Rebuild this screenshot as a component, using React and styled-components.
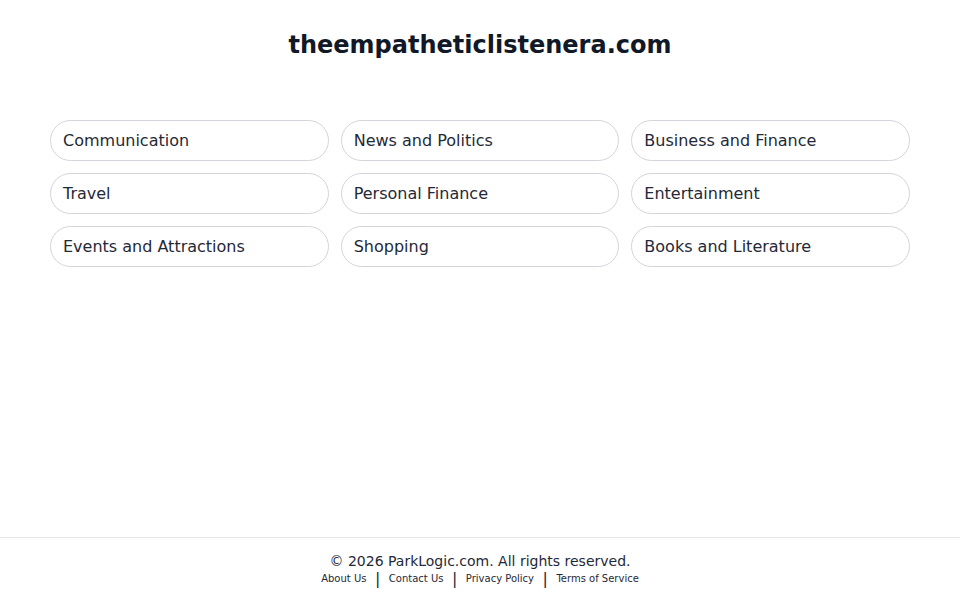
import React from 'react'
import styled, { createGlobalStyle } from 'styled-components'

const categories = [
  'Communication',
  'News and Politics',
  'Business and Finance',
  'Travel',
  'Personal Finance',
  'Entertainment',
  'Events and Attractions',
  'Shopping',
  'Books and Literature',
]

const links = ['About Us', 'Contact Us', 'Privacy Policy', 'Terms of Service']

const GlobalStyle = createGlobalStyle`
  html, body {
    margin: 0;
    padding: 0;
    background: #ffffff;
    font-family: "DejaVu Sans", "Liberation Sans", sans-serif;
  }
  * { box-sizing: border-box; }
`

const Page = styled.div`
  min-height: 100vh;
  display: flex;
  flex-direction: column;
`

const Main = styled.main`
  flex: 1;
  padding: 29px 50px 0;
`

const Title = styled.h1`
  margin: 0;
  text-align: center;
  font-size: 24px;
  line-height: 32px;
  font-weight: 700;
  color: #111827;
`

const Grid = styled.div`
  margin-top: 59px;
  display: grid;
  grid-template-columns: repeat(3, 1fr);
  gap: 12px;
`

const Pill = styled.a`
  display: flex;
  align-items: center;
  height: 41px;
  padding: 0 12px;
  border: 1px solid #d1d5db;
  border-radius: 21px;
  font-size: 16px;
  color: #1f2937;
  text-decoration: none;
  cursor: pointer;
`

const Footer = styled.footer`
  border-top: 1px solid #e5e7eb;
  padding: 13px 0 14px;
  text-align: center;
`

const Copy = styled.p`
  margin: 0;
  font-size: 14px;
  line-height: 20px;
  color: #1f2937;
`

const Links = styled.nav`
  display: flex;
  justify-content: center;
  align-items: center;
  height: 15px;
  font-size: 10px;
  color: #1f2937;
`

const LinkItem = styled.a`
  color: inherit;
  text-decoration: none;
`

const Sep = styled.span`
  font-size: 16px;
  line-height: 15px;
  padding: 0 8.5px;
  color: #1f2937;
`

export default function App() {
  return (
    <Page>
      <GlobalStyle />
      <Main>
        <Title>theempatheticlistenera.com</Title>
        <Grid>
          {categories.map((c) => (
            <Pill key={c}>{c}</Pill>
          ))}
        </Grid>
      </Main>
      <Footer>
        <Copy>© 2026 ParkLogic.com. All rights reserved.</Copy>
        <Links>
          {links.map((l, i) => (
            <React.Fragment key={l}>
              {i > 0 && <Sep>|</Sep>}
              <LinkItem>{l}</LinkItem>
            </React.Fragment>
          ))}
        </Links>
      </Footer>
    </Page>
  )
}
